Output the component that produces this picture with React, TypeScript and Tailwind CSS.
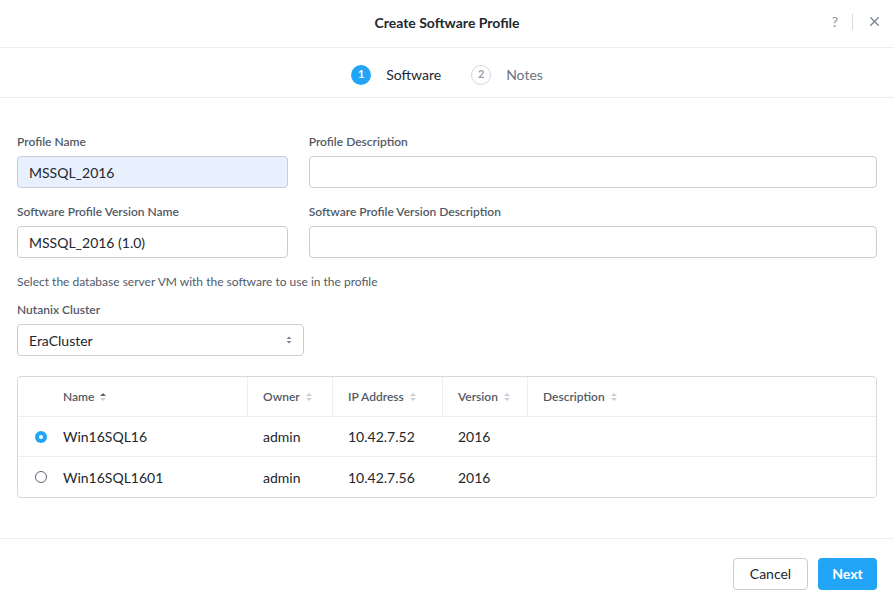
import { X } from "lucide-react";

const rows = [
  { name: "Win16SQL16", owner: "admin", ip: "10.42.7.52", version: "2016", selected: true },
  { name: "Win16SQL1601", owner: "admin", ip: "10.42.7.56", version: "2016", selected: false },
];

function SortIcon({ active }: { active?: boolean }) {
  return (
    <svg width="6" height="10" viewBox="0 0 6 10" className="ml-1.5">
      <path d="M3 1 L6 4 L0 4 Z" fill={active ? "#5a6270" : "#c9ced6"} />
      <path d="M3 9 L6 6 L0 6 Z" fill="#c9ced6" />
    </svg>
  );
}

function Field({ label, value, width, filled }: { label: string; value?: string; width: string; filled?: boolean }) {
  return (
    <div className={width}>
      <div className="text-[12px] font-semibold text-[#525a66] h-[14px] leading-[14px]">{label}</div>
      <div
        className={`mt-[7px] h-[32px] rounded-[4px] border border-[#c9ced6] px-[11px] flex items-center text-[14px] text-[#22272e] ${
          filled ? "bg-[#e8f0fe]" : "bg-white"
        }`}
      >
        {value}
      </div>
    </div>
  );
}

export default function App() {
  return (
    <div className="w-[894px] h-[608px] bg-white flex flex-col" style={{ fontFamily: "Lato, 'Open Sans', sans-serif" }}>
      {/* header */}
      <div className="h-[48px] border-b border-[#eceef1] relative flex items-center justify-center">
        <div className="text-[14px] font-bold text-[#22272e] -mt-[2px]">Create Software Profile</div>
        <div className="absolute right-[14px] top-0 h-full flex items-center -mt-[2px]">
          <span className="text-[14px] text-[#8a929e] mr-[14px]">?</span>
          <span className="w-px h-[16px] bg-[#d5d9df] mr-[14px]" />
          <X size={15} strokeWidth={2.2} className="text-[#7a8290] -mr-[2px]" />
        </div>
      </div>

      {/* steps */}
      <div className="h-[50px] border-b border-[#eceef1] flex items-center justify-center pt-[4px]">
        <div className="flex items-center">
          <span className="w-[20px] h-[20px] rounded-full bg-[#22a5f7] text-white text-[11px] font-bold flex items-center justify-center">1</span>
          <span className="ml-[15px] text-[14px] text-[#22272e]">Software</span>
          <span className="ml-[30px] w-[20px] h-[20px] rounded-full border border-[#d5d9df] text-[#9aa1ab] text-[11px] font-bold flex items-center justify-center">2</span>
          <span className="ml-[15px] text-[14px] text-[#6a7280]">Notes</span>
        </div>
      </div>

      {/* body */}
      <div className="px-[17px] pt-[37px] flex-1 flex flex-col">
        <div className="flex gap-[21px]">
          <Field label="Profile Name" value="MSSQL_2016" width="w-[271px]" filled />
          <Field label="Profile Description" width="w-[569px]" />
        </div>
        <div className="flex gap-[21px] mt-[17px]">
          <Field label="Software Profile Version Name" value="MSSQL_2016 (1.0)" width="w-[271px]" />
          <Field label="Software Profile Version Description" width="w-[569px]" />
        </div>
        <div className="mt-[17px] text-[12px] text-[#525a66] h-[14px] leading-[14px]">
          Select the database server VM with the software to use in the profile
        </div>
        <div className="mt-[14px] text-[12px] font-semibold text-[#525a66] h-[14px] leading-[14px]">Nutanix Cluster</div>
        <div className="mt-[7px] w-[287px] h-[32px] rounded-[4px] border border-[#c9ced6] px-[11px] flex items-center justify-between text-[14px] text-[#22272e]">
          <span>EraCluster</span>
          <svg width="6" height="10" viewBox="0 0 6 10">
            <path d="M3 1.5 L5.5 4 L0.5 4 Z" fill="#7a8290" />
            <path d="M3 8.5 L5.5 6 L0.5 6 Z" fill="#7a8290" />
          </svg>
        </div>

        {/* table */}
        <div className="mt-[20px] w-[860px] rounded-[4px] border border-[#d5d9df] overflow-hidden">
          <div className="h-[40px] flex items-center border-b border-[#eceef1] text-[12px] font-semibold text-[#525a66]">
            <div className="w-[45px]" />
            <div className="w-[185px] h-full flex items-center border-r border-[#eceef1]">Name<SortIcon active /></div>
            <div className="w-[85px] h-full flex items-center pl-[15px] border-r border-[#eceef1]">Owner<SortIcon /></div>
            <div className="w-[110px] h-full flex items-center pl-[15px] border-r border-[#eceef1]">IP Address<SortIcon /></div>
            <div className="w-[85px] h-full flex items-center pl-[15px] border-r border-[#eceef1]">Version<SortIcon /></div>
            <div className="flex-1 h-full flex items-center pl-[15px]">Description<SortIcon /></div>
          </div>
          {rows.map((r, i) => (
            <div
              key={r.name}
              className={`h-[40px] flex items-center text-[14px] text-[#22272e] ${i === 0 ? "border-b border-[#eceef1]" : ""}`}
            >
              <div className="w-[45px] flex justify-center">
                {r.selected ? (
                  <span className="w-[12px] h-[12px] rounded-full bg-[#22a5f7] flex items-center justify-center">
                    <span className="w-[4px] h-[4px] rounded-full bg-white" />
                  </span>
                ) : (
                  <span className="w-[12px] h-[12px] rounded-full border border-[#5a6270]" />
                )}
              </div>
              <div className="w-[185px]">{r.name}</div>
              <div className="w-[85px] pl-[15px]">{r.owner}</div>
              <div className="w-[110px] pl-[15px]">{r.ip}</div>
              <div className="w-[85px] pl-[15px]">{r.version}</div>
              <div className="flex-1" />
            </div>
          ))}
        </div>
      </div>

      {/* footer */}
      <div className="h-[70px] border-t border-[#eceef1] flex items-center justify-end pr-[17px] gap-[10px]">
        <button className="w-[75px] h-[32px] rounded-[4px] border border-[#c9ced6] bg-white text-[14px] text-[#22272e]">Cancel</button>
        <button className="w-[59px] h-[32px] rounded-[4px] bg-[#22a5f7] text-[14px] font-bold text-white">Next</button>
      </div>
    </div>
  );
}
